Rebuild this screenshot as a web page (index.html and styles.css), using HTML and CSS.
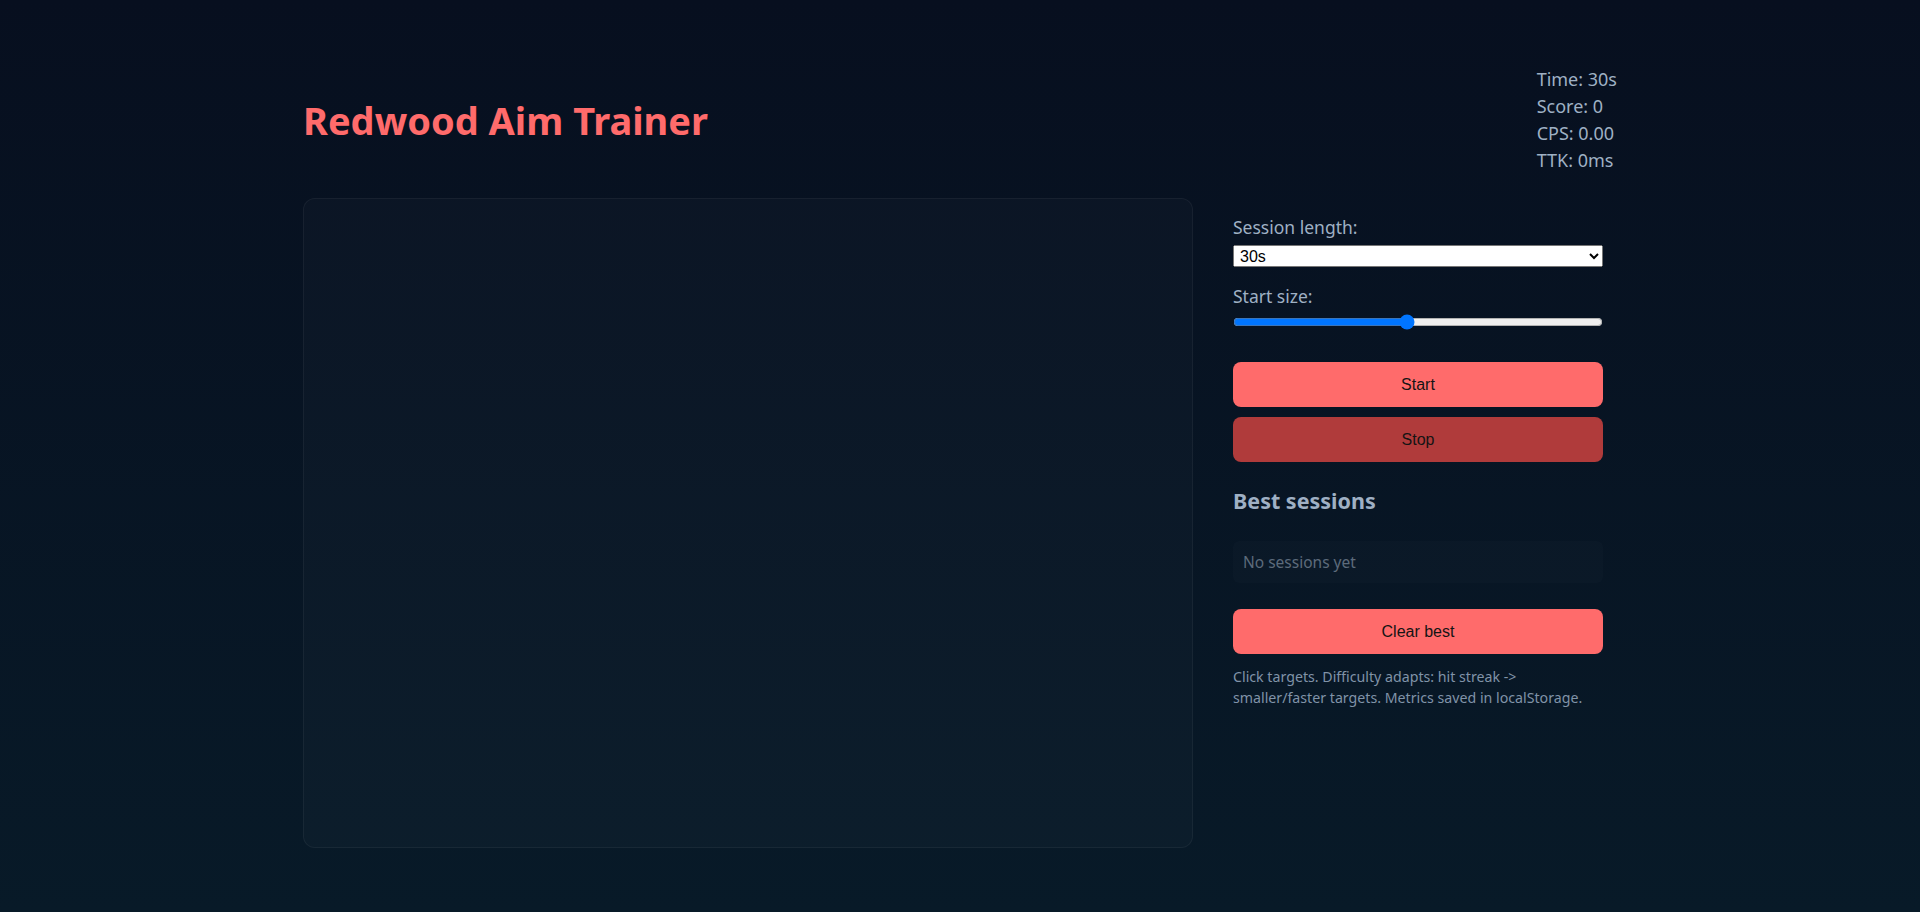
FILE: index.html
```html
<!DOCTYPE html>
<html lang="en">
<head>
<meta charset="utf-8">
<title>Redwood Aim Trainer</title>
<link rel="stylesheet" href="styles.css">
</head>
<body>
<div class="app">
  <header class="top">
    <h1 class="title">Redwood Aim Trainer</h1>
    <div class="stats">
      <div>Time: 30s</div>
      <div>Score: 0</div>
      <div>CPS: 0.00</div>
      <div>TTK: 0ms</div>
    </div>
  </header>
  <main class="main">
    <div class="arena"></div>
    <aside class="panel">
      <label class="lbl" for="len">Session length:</label>
      <select id="len" class="sel">
        <option>30s</option>
        <option>60s</option>
        <option>90s</option>
      </select>
      <label class="lbl lbl-size" for="size">Start size:</label>
      <input id="size" class="range" type="range" min="0" max="100" value="47">
      <button class="btn btn-start">Start</button>
      <button class="btn btn-stop">Stop</button>
      <h2 class="best-title">Best sessions</h2>
      <div class="best-list">No sessions yet</div>
      <button class="btn btn-clear">Clear best</button>
      <p class="note">Click targets. Difficulty adapts: hit streak -&gt; smaller/faster targets. Metrics saved in localStorage.</p>
    </aside>
  </main>
</div>
</body>
</html>
```
FILE: styles.css
```css
html, body {
  margin: 0;
  padding: 0;
}
body {
  min-height: 912px;
  background: linear-gradient(180deg, #070f1f 0%, #081a28 100%);
  font-family: "Noto Sans", "Open Sans", sans-serif;
  color: #9fb0c4;
}
.app {
  width: 1314px;
  margin: 0 auto;
  padding-top: 66px;
}
.top {
  display: flex;
  justify-content: space-between;
  align-items: center;
  margin-bottom: 24px;
}
.title {
  margin: 0;
  font-size: 38px;
  font-weight: 700;
  color: #ff6b6b;
  letter-spacing: 0;
}
.stats {
  font-size: 18px;
  line-height: 27px;
  color: #9fb0c4;
  white-space: nowrap;
}
.main {
  display: grid;
  grid-template-columns: 890px 370px;
  column-gap: 40px;
}
.arena {
  height: 648px;
  border: 1px solid rgba(255, 255, 255, 0.05);
  border-radius: 12px;
  background: rgba(255, 255, 255, 0.018);
}
.panel {
  display: flex;
  flex-direction: column;
  padding-top: 16px;
}
.lbl {
  font-size: 17.5px;
  line-height: 27px;
  color: #9fb0c4;
}
.sel {
  margin-top: 4px;
  height: 22px;
  width: 100%;
  padding: 0 2px;
  font-family: "Liberation Sans", Arial, sans-serif;
  font-size: 16px;
  color: #000;
}
.lbl-size {
  margin-top: 16px;
}
.range {
  width: 100%;
  margin: 4px 0 0;
  height: 16px;
}
.btn {
  height: 45px;
  width: 100%;
  border: none;
  border-radius: 8px;
  font-family: "Liberation Sans", Arial, sans-serif;
  font-size: 16px;
  color: #141414;
  cursor: pointer;
}
.btn-start {
  margin-top: 32px;
  background: #ff6b6b;
}
.btn-stop {
  margin-top: 10px;
  background: #b03b3b;
}
.best-title {
  margin: 24px 0 0;
  font-size: 21.5px;
  line-height: 30px;
  font-weight: 700;
  color: #9fb0c4;
}
.best-list {
  margin-top: 25px;
  height: 42px;
  box-sizing: border-box;
  padding: 0 10px;
  display: flex;
  align-items: center;
  border-radius: 6px;
  background: rgba(255, 255, 255, 0.015);
  font-size: 15.5px;
  color: #5d6b7b;
}
.btn-clear {
  margin-top: 26px;
  background: #ff6b6b;
}
.note {
  margin: 12px 0 0;
  font-size: 14.2px;
  line-height: 21px;
  color: #8093a8;
}
```
